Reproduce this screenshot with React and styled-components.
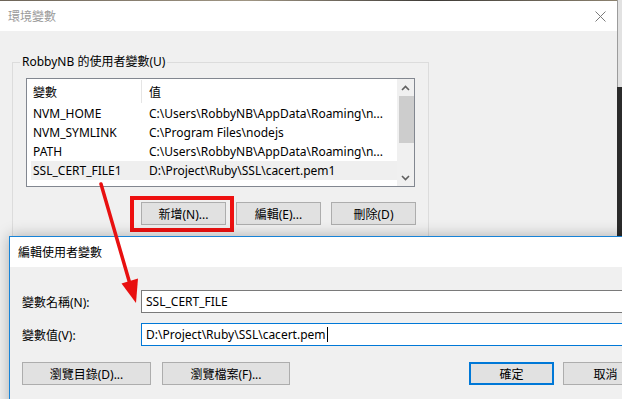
import React from 'react';
import styled, { createGlobalStyle, css } from 'styled-components';

const GlobalStyle = createGlobalStyle`
  html, body {
    margin: 0;
    padding: 0;
    background: #f0f0f0;
  }
  body {
    font-family: "Noto Sans", "Noto Sans CJK TC", sans-serif;
    font-size: 12px;
    color: #000;
  }
`;

const Screen = styled.div`
  position: relative;
  width: 622px;
  height: 399px;
  overflow: hidden;
  display: flex;
`;

const MainWindow = styled.div`
  flex: 0 0 617px;
  display: flex;
  flex-direction: column;
  background: #f0f0f0;
`;

const EdgeStrip = styled.div`
  flex: 1;
  display: flex;
  flex-direction: column;
`;

const EdgeTop = styled.div`
  height: 87px;
  background: #e2e2e2;
  border-left: 1px solid #9c9c9c;
`;

const EdgeBottom = styled.div`
  flex: 1;
  background: #2b2b2b;
`;

const TopLine = styled.div`
  height: 1px;
  background: linear-gradient(90deg, #6d6458, #a09684 40%, #3d3a36 70%, #8c826f);
`;

const TitleBar = styled.div`
  height: 30px;
  background: #fff;
  display: flex;
  align-items: center;
  justify-content: space-between;
  padding: 0 11px 0 8px;
`;

const Title = styled.span`
  color: ${p => (p.$active ? '#000' : '#9a9a9a')};
  font-size: 12px;
`;

const Body = styled.div`
  flex: 1;
  padding: 31px 0 0 12px;
`;

const GroupBox = styled.div`
  position: relative;
  width: 417px;
  box-sizing: border-box;
  border: 1px solid #dcdcdc;
  padding: 15px 12px 20px 13px;
  height: 200px;
`;

const Legend = styled.span`
  position: absolute;
  top: -9px;
  left: 7px;
  padding: 0 2px;
  background: #f0f0f0;
  line-height: 16px;
`;

const ListBox = styled.div`
  width: 389px;
  height: 109px;
  box-sizing: border-box;
  border: 1px solid #828790;
  background: #fff;
  display: flex;
`;

const ListArea = styled.div`
  flex: 1;
  display: flex;
  flex-direction: column;
  min-width: 0;
`;

const Header = styled.div`
  height: 25px;
  display: flex;
  align-items: center;
`;

const HeaderCell = styled.div`
  ${p =>
    p.$first
      ? css`
          width: 115px;
          padding-left: 6px;
          border-right: 1px solid #e5e5e5;
          height: 23px;
        `
      : css`
          padding-left: 7px;
        `}
  box-sizing: border-box;
  display: flex;
  align-items: center;
`;

const Row = styled.div`
  height: 19px;
  margin-left: 4px;
  display: flex;
  align-items: center;
  background: ${p => (p.$selected ? '#efefef' : 'transparent')};
`;

const NameCell = styled.div`
  width: 112px;
  padding-left: 2px;
  box-sizing: border-box;
  white-space: nowrap;
`;

const ValueCell = styled.div`
  flex: 1;
  min-width: 0;
  padding: 0 4px 0 6px;
  white-space: nowrap;
`;

const ScrollBar = styled.div`
  width: 17px;
  background: #f0f0f0;
  display: flex;
  flex-direction: column;
`;

const ScrollArrow = styled.div`
  height: 17px;
  display: flex;
  align-items: center;
  justify-content: center;
`;

const ScrollThumb = styled.div`
  height: 47px;
  margin: 0 0 0 2px;
  background: #cdcdcd;
`;

const ScrollTrack = styled.div`
  flex: 1;
`;

const ButtonRow = styled.div`
  display: flex;
  justify-content: flex-end;
  gap: 10px;
  margin-top: 15px;
`;

const Button = styled.div`
  position: relative;
  width: ${p => p.$w || 85}px;
  height: 23px;
  box-sizing: border-box;
  background: #e1e1e1;
  border: ${p => (p.$default ? '2px solid #0078d7' : '1px solid #adadad')};
  display: flex;
  align-items: center;
  justify-content: center;
  ${p =>
    p.$marked &&
    css`
      &::after {
        content: '';
        position: absolute;
        top: -7px;
        bottom: -8px;
        left: -12px;
        right: -9px;
        border: 4px solid #ee1111;
      }
    `}
`;

const EditDialog = styled.div`
  position: absolute;
  left: 9px;
  top: 236px;
  width: 652px;
  height: 200px;
  box-sizing: border-box;
  border: 1px solid #1883d7;
  background: #f0f0f0;
  box-shadow: 0 0 14px rgba(0, 0, 0, 0.28);
  display: flex;
  flex-direction: column;
`;

const DialogTitleBar = styled(TitleBar)`
  padding-left: 8px;
`;

const DialogBody = styled.div`
  padding: 23px 12px 0 12px;
  display: flex;
  flex-direction: column;
  gap: 10px;
`;

const FormRow = styled.div`
  display: flex;
  align-items: center;
`;

const FieldLabel = styled.label`
  width: 119px;
  flex: 0 0 119px;
`;

const TextBox = styled.div`
  flex: 1;
  height: 23px;
  box-sizing: border-box;
  border: 1px solid ${p => (p.$focused ? '#0078d7' : '#7a7a7a')};
  background: #fff;
  padding-left: 4px;
  display: flex;
  align-items: center;
  white-space: nowrap;
`;

const Caret = styled.span`
  display: inline-block;
  width: 1px;
  height: 15px;
  background: #000;
  margin-left: 1px;
`;

const DialogButtons = styled.div`
  display: flex;
  align-items: center;
  margin-top: 6px;
`;

const ButtonGroup = styled.div`
  display: flex;
  gap: ${p => p.$gap}px;
  margin-left: ${p => (p.$right ? 'auto' : '0')};
`;

const Overlay = styled.svg`
  position: absolute;
  left: 0;
  top: 0;
  pointer-events: none;
`;

const Chevron = ({ up }) => (
  <svg width="9" height="6" viewBox="0 0 9 6">
    <polyline
      points={up ? '1,5 4.5,1.5 8,5' : '1,1 4.5,4.5 8,1'}
      fill="none"
      stroke="#606060"
      strokeWidth="1.6"
    />
  </svg>
);

const CloseIcon = () => (
  <svg width="11" height="11" viewBox="0 0 11 11">
    <path d="M0.5 0.5 L10.5 10.5 M10.5 0.5 L0.5 10.5" stroke="#7a7a7a" strokeWidth="1" />
  </svg>
);

// values are shown the way the list column truncates them
const vars = [
  { name: 'NVM_HOME', value: 'C:\\Users\\RobbyNB\\AppData\\Roaming\\n...' },
  { name: 'NVM_SYMLINK', value: 'C:\\Program Files\\nodejs' },
  { name: 'PATH', value: 'C:\\Users\\RobbyNB\\AppData\\Roaming\\n...' },
  { name: 'SSL_CERT_FILE1', value: 'D:\\Project\\Ruby\\SSL\\cacert.pem1', selected: true },
];

export default function App() {
  return (
    <>
      <GlobalStyle />
      <Screen>
        <MainWindow>
          <TopLine />
          <TitleBar>
            <Title>環境變數</Title>
            <CloseIcon />
          </TitleBar>
          <Body>
            <GroupBox>
              <Legend>RobbyNB 的使用者變數(U)</Legend>
              <ListBox>
                <ListArea>
                  <Header>
                    <HeaderCell $first>變數</HeaderCell>
                    <HeaderCell>值</HeaderCell>
                  </Header>
                  {vars.map(v => (
                    <Row key={v.name} $selected={v.selected}>
                      <NameCell>{v.name}</NameCell>
                      <ValueCell>{v.value}</ValueCell>
                    </Row>
                  ))}
                </ListArea>
                <ScrollBar>
                  <ScrollArrow>
                    <Chevron up />
                  </ScrollArrow>
                  <ScrollThumb />
                  <ScrollTrack />
                  <ScrollArrow>
                    <Chevron />
                  </ScrollArrow>
                </ScrollBar>
              </ListBox>
              <ButtonRow>
                <Button $marked>新增(N)...</Button>
                <Button>編輯(E)...</Button>
                <Button>刪除(D)</Button>
              </ButtonRow>
            </GroupBox>
          </Body>
        </MainWindow>
        <EdgeStrip>
          <EdgeTop />
          <EdgeBottom />
        </EdgeStrip>

        <EditDialog>
          <DialogTitleBar>
            <Title $active>編輯使用者變數</Title>
          </DialogTitleBar>
          <DialogBody>
            <FormRow>
              <FieldLabel>變數名稱(N):</FieldLabel>
              <TextBox>SSL_CERT_FILE</TextBox>
            </FormRow>
            <FormRow>
              <FieldLabel>變數值(V):</FieldLabel>
              <TextBox $focused>
                D:\Project\Ruby\SSL\cacert.pem
                <Caret />
              </TextBox>
            </FormRow>
            <DialogButtons>
              <ButtonGroup $gap={11}>
                <Button $w={129}>瀏覽目錄(D)...</Button>
                <Button $w={128}>瀏覽檔案(F)...</Button>
              </ButtonGroup>
              <ButtonGroup $gap={9} $right>
                <Button $default>確定</Button>
                <Button>取消</Button>
              </ButtonGroup>
            </DialogButtons>
          </DialogBody>
        </EditDialog>

        <Overlay width="622" height="399">
          <line x1="101" y1="184" x2="130" y2="284" stroke="#e81010" strokeWidth="3.5" strokeLinecap="round" />
          <polygon points="136,303 121.5,283.5 138,278.5" fill="#e81010" />
        </Overlay>
      </Screen>
    </>
  );
}
